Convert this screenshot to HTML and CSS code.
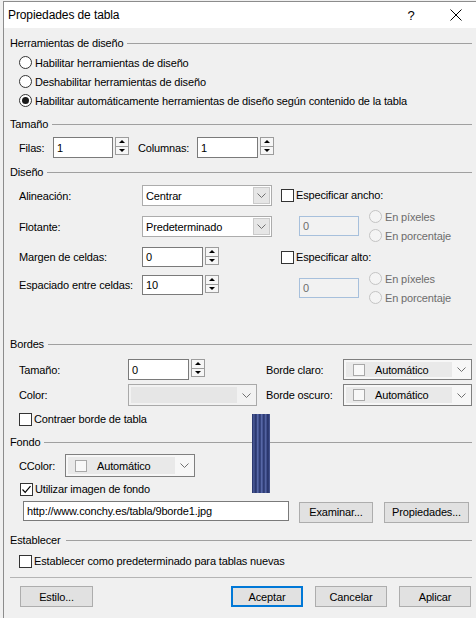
FILE: index.html
```html
<!DOCTYPE html>
<html lang="es">
<head>
<meta charset="utf-8">
<title>Propiedades de tabla</title>
<link rel="stylesheet" href="styles.css">
</head>
<body>
<div class="win">
  <div class="titlebar">
    <span class="title">Propiedades de tabla</span>
    <span class="help">?</span>
    <span class="close"><svg width="12" height="12" viewBox="0 0 12 12"><path d="M0.5 0.5 L11.5 11.5 M11.5 0.5 L0.5 11.5" stroke="#000" stroke-width="1" fill="none"/></svg></span>
  </div>
  <div class="content">
    <div class="gh g-herr"><span>Herramientas de diseño</span><i class="line"></i></div>
    <div class="radios">
      <div class="r19"><span class="radio"></span>Habilitar herramientas de diseño</div>
      <div class="r19"><span class="radio"></span>Deshabilitar herramientas de diseño</div>
      <div class="r19"><span class="radio on"></span>Habilitar automáticamente herramientas de diseño según contenido de la tabla</div>
    </div>

    <div class="gh g-tam"><span>Tamaño</span><i class="line"></i></div>
    <div class="row r-filas">
      <span class="lbl w34">Filas:</span>
      <span class="inp w60">1</span>
      <span class="spin"><b><i class="up"></i></b><b><i class="dn"></i></b></span>
      <span class="lbl w59 ml9">Columnas:</span>
      <span class="inp w61">1</span>
      <span class="spin"><b><i class="up"></i></b><b><i class="dn"></i></b></span>
    </div>

    <div class="gh g-dis"><span>Diseño</span><i class="line"></i></div>
    <div class="design">
      <div class="dleft">
        <div class="drow d1"><span class="lbl w123">Alineación:</span><span class="sel w130"><span class="val">Centrar</span><span class="arr"><svg width="9" height="5" viewBox="0 0 9 5"><path d="M0.5 0.5 L4.5 4.5 L8.5 0.5" fill="none" stroke="#707070"/></svg></span></span></div>
        <div class="drow d2"><span class="lbl w123">Flotante:</span><span class="sel w130"><span class="val">Predeterminado</span><span class="arr"><svg width="9" height="5" viewBox="0 0 9 5"><path d="M0.5 0.5 L4.5 4.5 L8.5 0.5" fill="none" stroke="#707070"/></svg></span></span></div>
        <div class="drow d3"><span class="lbl w123">Margen de celdas:</span><span class="inp w61 h20">0</span><span class="spin"><b><i class="up"></i></b><b><i class="dn"></i></b></span></div>
        <div class="drow d4"><span class="lbl w123">Espaciado entre celdas:</span><span class="inp w61 h20">10</span><span class="spin"><b><i class="up"></i></b><b><i class="dn"></i></b></span></div>
      </div>
      <div class="dright">
        <div class="ckrow c1"><span class="check"></span>Especificar ancho:</div>
        <div class="unit u1">
          <span class="inp dis">0</span>
          <div class="uradios">
            <div class="r19 dis"><span class="radio dis"></span>En píxeles</div>
            <div class="r19 dis"><span class="radio dis"></span>En porcentaje</div>
          </div>
        </div>
        <div class="ckrow c2"><span class="check"></span>Especificar alto:</div>
        <div class="unit u2">
          <span class="inp dis">0</span>
          <div class="uradios">
            <div class="r19 dis"><span class="radio dis"></span>En píxeles</div>
            <div class="r19 dis"><span class="radio dis"></span>En porcentaje</div>
          </div>
        </div>
      </div>
    </div>

    <div class="gh g-bor"><span>Bordes</span><i class="line"></i></div>
    <div class="row b1">
      <div class="bcell"><span class="lbl w109">Tamaño:</span><span class="inp w61">0</span><span class="spin"><b><i class="up"></i></b><b><i class="dn"></i></b></span></div>
      <span class="lbl w77">Borde claro:</span>
      <span class="csel w129"><span class="cin"><span class="sw"></span>Automático</span><span class="carr"><svg width="9" height="5" viewBox="0 0 9 5"><path d="M0.5 0.5 L4.5 4.5 L8.5 0.5" fill="none" stroke="#707070"/></svg></span></span>
    </div>
    <div class="row b2">
      <div class="bcell"><span class="lbl w109">Color:</span><span class="csel w129 disc"><span class="cin"></span><span class="carr"><svg width="9" height="5" viewBox="0 0 9 5"><path d="M0.5 0.5 L4.5 4.5 L8.5 0.5" fill="none" stroke="#707070"/></svg></span></span></div>
      <span class="lbl w77">Borde oscuro:</span>
      <span class="csel w129"><span class="cin"><span class="sw"></span>Automático</span><span class="carr"><svg width="9" height="5" viewBox="0 0 9 5"><path d="M0.5 0.5 L4.5 4.5 L8.5 0.5" fill="none" stroke="#707070"/></svg></span></span>
    </div>
    <div class="ckrow k-contraer"><span class="check"></span>Contraer borde de tabla</div>

    <div class="gh g-fon"><span>Fondo</span><i class="line"></i></div>
    <div class="row f1">
      <span class="lbl w46">CColor:</span>
      <span class="csel w130"><span class="cin"><span class="sw"></span>Automático</span><span class="carr"><svg width="9" height="5" viewBox="0 0 9 5"><path d="M0.5 0.5 L4.5 4.5 L8.5 0.5" fill="none" stroke="#707070"/></svg></span></span>
    </div>
    <div class="ckrow k-util"><span class="check"><svg width="11" height="11" viewBox="0 0 11 11"><path d="M1.5 5.5 L4.2 8.3 L9.5 2.2" fill="none" stroke="#000" stroke-width="1.2"/></svg></span>Utilizar imagen de fondo</div>
    <div class="row f3">
      <span class="inp url">http://www.conchy.es/tabla/9borde1.jpg</span>
      <span class="btn bexam">Examinar...</span>
      <span class="btn bprop">Propiedades...</span>
    </div>

    <div class="gh g-est"><span>Establecer</span><i class="line"></i></div>
    <div class="ckrow k-est"><span class="check"></span>Establecer como predeterminado para tablas nuevas</div>
    <div class="sep"></div>
    <div class="row btns">
      <span class="btn bestilo">Estilo...</span>
      <span class="btn bok">Aceptar</span>
      <span class="btn bcan">Cancelar</span>
      <span class="btn bapl">Aplicar</span>
    </div>
  </div>
</div>
<div class="strip"></div>
</body>
</html>
```

FILE: styles.css
```css
* { box-sizing: border-box; }
html, body { margin: 0; padding: 0; }
body {
  width: 476px;
  height: 618px;
  overflow: hidden;
  background: #f0f0f0;
  font-family: "Liberation Sans", Arial, sans-serif;
  font-size: 11px;
  letter-spacing: -0.15px;
  color: #000;
  position: relative;
}
.win {
  margin: 1px 0 0 3px;
  border-left: 1px solid #8c8c8c;
  border-top: 1px solid #8c8c8c;
  height: 617px;
}
.titlebar {
  height: 26px;
  background: #fff;
  display: flex;
  align-items: center;
  padding-left: 4px;
}
.title { flex: 1; font-size: 12px; letter-spacing: -0.1px; }
.help { width: 10px; margin-right: 34px; text-align: center; font-size: 13px; }
.close { width: 12px; height: 12px; margin-right: 14px; display: flex; }

.content { padding: 0 4px 0 6px; }

.gh { display: flex; align-items: center; height: 16px; }
.gh .line { flex: 1; height: 0; border-top: 1px solid #a0a0a0; margin-left: 4px; }
.g-herr { margin-top: 7px; }
.g-tam { margin-top: 6px; }
.g-dis { margin-top: 6px; }
.g-bor { margin-top: 29px; }
.g-fon { margin-top: 7px; }
.g-est { margin-top: 9px; }
.g-est .line { margin-left: 6px; }

.radios { margin-top: 2px; padding-left: 9px; }
.r19 { height: 19px; display: flex; align-items: center; white-space: nowrap; }
.radio {
  width: 13px; height: 13px; border-radius: 50%;
  border: 1px solid #333; background: #fff;
  margin-right: 3px; flex: none;
  display: flex; align-items: center; justify-content: center;
}
.radio.on::after { content: ""; width: 7px; height: 7px; border-radius: 50%; background: #1a1a1a; }
.radio.dis { border-color: #c4c4c4; background: #f4f4f4; }
.r19.dis { color: #6d6d6d; }

.row { display: flex; align-items: center; padding-left: 9px; white-space: nowrap; }
.lbl { flex: none; }
.w34 { width: 34px; }
.w59 { width: 59px; }
.w46 { width: 46px; }
.w77 { width: 77px; }
.w109 { width: 109px; }
.w123 { width: 123px; }
.ml9 { margin-left: 9px; }

.inp {
  display: flex; align-items: center;
  height: 21px; border: 1px solid #7a7a7a; background: #fff;
  padding-left: 3px; flex: none;
}
.w60 { width: 60px; }
.w61 { width: 61px; }
.h20 { height: 20px; }
.inp.dis { width: 60px; height: 20px; border-color: #a7c0dc; background: #f2f2f2; color: #6d6d6d; }

.spin { display: flex; flex-direction: column; width: 14px; height: 18px; margin-left: 2px; align-self: flex-start; flex: none; }
.spin b {
  flex: 1; border: 1px solid #9c9c9c; background: #f6f6f6;
  display: flex; align-items: center; justify-content: center;
}
.spin b + b { margin-top: -1px; }
.spin .up { width: 0; height: 0; border-left: 3px solid transparent; border-right: 3px solid transparent; border-bottom: 3px solid #000; }
.spin .dn { width: 0; height: 0; border-left: 3px solid transparent; border-right: 3px solid transparent; border-top: 3px solid #000; }

.r-filas { margin-top: 5px; height: 21px; }

.design { display: flex; padding-left: 9px; height: 127px; }
.dleft { width: 253px; flex: none; }
.drow { display: flex; align-items: center; white-space: nowrap; }
.d1 { margin-top: 5px; height: 21px; }
.d2 { margin-top: 10px; height: 21px; }
.d3 { margin-top: 10px; height: 20px; }
.d4 { margin-top: 8px; height: 20px; }

.sel {
  display: flex; height: 21px; border: 1px solid #acacac; background: #fff; flex: none;
}
.w130 { width: 130px; }
.w129 { width: 129px; }
.sel .val { flex: 1; display: flex; align-items: center; padding-left: 3px; }
.sel .arr {
  width: 17px; margin: 1px; border: 1px solid #cacaca; background: #e6e6e6;
  display: flex; align-items: center; justify-content: center;
}

.dright { margin-left: 9px; }
.ckrow { display: flex; align-items: center; height: 16px; white-space: nowrap; }
.check {
  width: 13px; height: 13px; border: 1px solid #333; background: #fff;
  margin-right: 2px; flex: none; display: flex; align-items: center; justify-content: center;
}
.c1 { margin-top: 7px; }
.c2 { margin-top: 4px; }
.unit { display: flex; align-items: center; height: 38px; margin-top: 4px; padding-left: 18px; }
.uradios { margin-left: 10px; }

.b1 { margin-top: 7px; height: 21px; }
.b2 { margin-top: 4px; height: 22px; }
.bcell { width: 247px; display: flex; align-items: center; flex: none; }
.csel {
  display: flex; align-items: stretch; height: 100%;
  border: 1px solid #7f7f7f; background: #f7f7f7; flex: none;
}
.csel .cin {
  flex: 1; display: flex; align-items: center; margin: 2px 0 2px 2px;
  background: #e9e9e9; padding-left: 7px;
}
.csel .carr { width: 19px; display: flex; align-items: center; justify-content: center; }
.csel.disc { border-color: #a9a9a9; background: #f2f2f2; height: 22px; }
.csel.disc .cin { background: #e6e6e6; margin-right: 0; }
.b1 .csel { height: 21px; }
.b2 .csel { height: 22px; }
.sw { width: 12px; height: 12px; border: 1px solid #a8a8a8; background: #f8f8f8; margin-right: 10px; flex: none; }

.k-contraer { margin-top: 5px; padding-left: 9px; }

.f1 { margin-top: 4px; height: 23px; }
.f1 .csel { height: 23px; }
.k-util { margin-top: 4px; padding-left: 10px; }
.f3 { margin-top: 4px; height: 22px; padding-left: 13px; }
.url { width: 266px; height: 20px; align-self: flex-start; }

.btn {
  display: flex; align-items: center; justify-content: center;
  height: 21px; border: 1px solid #adadad; background: #e1e1e1; flex: none;
}
.bexam { width: 74px; margin-left: 10px; }
.bprop { width: 85px; margin-left: 11px; }

.k-est { margin-top: 5px; padding-left: 9px; }
.sep { margin-top: 8px; height: 0; border-top: 1px solid #b4b4b4; }
.btns { margin-top: 8px; height: 21px; padding-left: 10px; padding-right: 1px; }
.bestilo { width: 73px; }
.bok { width: 72px; margin-left: auto; border: 2px solid #0078d7; }
.bcan { width: 72px; margin-left: 12px; }
.bapl { width: 72px; margin-left: 12px; }

.strip {
  position: absolute;
  left: 252px; top: 414px; width: 18px; height: 79px;
  background:
    linear-gradient(90deg, rgba(20,30,80,0.35) 0, rgba(0,0,0,0) 30%, rgba(0,0,0,0) 70%, rgba(20,30,80,0.35) 100%),
    repeating-linear-gradient(90deg, #36457f 0 1px, #5767a6 1px 2px, #465694 2px 3px, #2f3c74 3px 4px);
  background-color: #44538f;
}
```
